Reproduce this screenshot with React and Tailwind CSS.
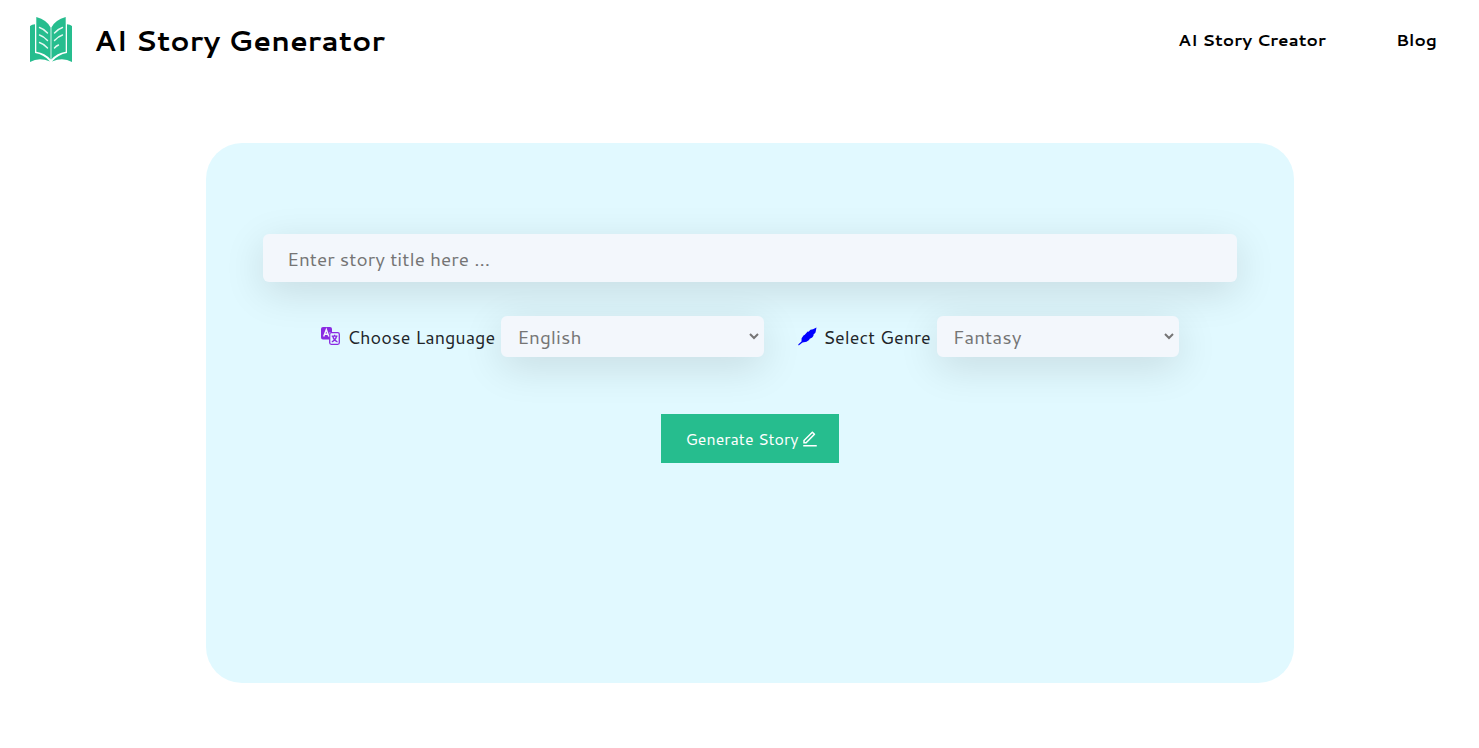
import { RiEditLine } from "react-icons/ri";

const field =
  "rounded-md bg-[#f3f7fc] text-[19px] text-[#757575] shadow-[0_10px_40px_0_rgba(0,0,0,0.12)] outline-none";

function BookLogo() {
  return (
    <svg viewBox="0 0 42 46" className="h-[46px] w-[42px]" aria-hidden="true">
      <path fill="#26bd8e" d="M0 9 Q2 7.500 5 7.300V36Q14 37.500 20 44.500Q9 40 0 45Z" />
      <path fill="#26bd8e" d="M42 9Q40 7.500 37 7.300V36Q28 37.500 22 44.500Q33 40 42 45Z" />
      <path fill="#26bd8e" d="M6.300 0Q17 3 20.600 10.500V42.500Q15 36 6.300 34.800Z" />
      <path fill="#26bd8e" d="M35.700 0Q25 3 21.400 10.500V42.500Q27 36 35.700 34.800Z" />
      <g fill="none" stroke="#e4f8f1" strokeWidth="1.400" strokeLinecap="round">
        <path d="M9.500 10.500Q14 12 17.500 16M9.500 18Q14 19.500 17.500 23.500M9.500 25.500Q14 27 17.500 31" />
        <path d="M32.500 10.500Q28 12 24.500 16M32.500 18Q28 19.500 24.500 23.500M28.500 28Q26 29 24.500 31" />
      </g>
    </svg>
  );
}

function TranslateIcon() {
  return (
    <svg viewBox="0 0 20 20" className="size-5" fill="none" stroke="#8a2be2" aria-hidden="true">
      <rect x="8.700" y="5.700" width="9.600" height="11.600" rx="1.500" strokeWidth="1.300" />
      <path d="M10.700 9.200H16.500M13.600 7.800V9.200M15.500 9.500Q14.500 13.300 10.800 15M11.800 9.500Q12.800 13.300 16.500 15" strokeWidth="1.200" />
      <path d="M2 0H9Q11 0 11 2V5H9.500Q8 5 8 6.500V12.500H2Q0 12.500 0 10.500V2Q0 0 2 0Z" fill="#8a2be2" stroke="none" />
      <path d="M2.700 9.500L5.300 2.600L7.800 9.500M3.600 7.300H7" stroke="#f3f7fc" strokeWidth="1.400" />
    </svg>
  );
}

function Feather() {
  return (
    <svg viewBox="0 0 19 19" className="size-[19px]" aria-hidden="true">
      <path
        fill="#0000ff"
        d="M18.500 0.500L15 2.200L12.500 2.800L10.500 4.700L9.700 4.600L6.500 8L5.700 8.200L3.600 11.200L3.500 14.500L0.200 17.600L0.700 18.400L4.500 15.400L8.500 14.800L11.800 12.600L10.900 12.300L14.200 10.600L15.900 8.300L14.900 8.200L17.500 5.500Z"
      />
    </svg>
  );
}

export default function App() {
  return (
    <div className="bg-white font-['Cantarell','Noto_Sans',sans-serif] text-black">
      <header className="flex h-20 items-center justify-between pr-[42px] pl-[30px]">
        <a href="#" className="flex items-center gap-[22px]">
          <BookLogo />
          <h1 className="text-[29px] font-bold">AI Story Generator</h1>
        </a>
        <nav className="flex gap-[70px] text-[17px] font-bold">
          <a href="#creator">AI Story Creator</a>
          <a href="#blog">Blog</a>
        </nav>
      </header>
      <main className="mt-[63px] mr-[185px] mb-16 ml-[206px]">
        <form className="flex flex-col items-center rounded-[36px] bg-[#e1f9ff] px-[57px] pt-[91px] pb-[220px]">
          <input
            aria-label="Story title"
            placeholder="Enter story title here ..."
            className={`${field} h-12 w-full px-6 placeholder:text-[#757575]`}
          />
          <div className="mt-[34px] flex items-center gap-[34px] text-lg text-[#212529]">
            <div className="flex items-center gap-[6px]">
              <label htmlFor="language" className="flex items-center gap-[6px]">
                <TranslateIcon />
                Choose Language
              </label>
              <select id="language" className={`${field} h-[41px] w-[263px] border-2 border-[#f3f7fc] px-2.5`}>
                <option>English</option>
              </select>
            </div>
            <div className="flex items-center gap-[6px]">
              <label htmlFor="genre" className="flex items-center gap-[6px]">
                <Feather />
                Select Genre
              </label>
              <select id="genre" className={`${field} h-[41px] w-[242px] border-2 border-[#f3f7fc] px-2.5`}>
                <option>Fantasy</option>
              </select>
            </div>
          </div>
          <button
            type="button"
            className="mt-[57px] flex h-[49px] items-center justify-center gap-[2px] bg-[#26bd8e] pr-5 pl-6 text-base text-white"
          >
            Generate Story
            <RiEditLine className="size-[18px]" />
          </button>
        </form>
      </main>
    </div>
  );
}
